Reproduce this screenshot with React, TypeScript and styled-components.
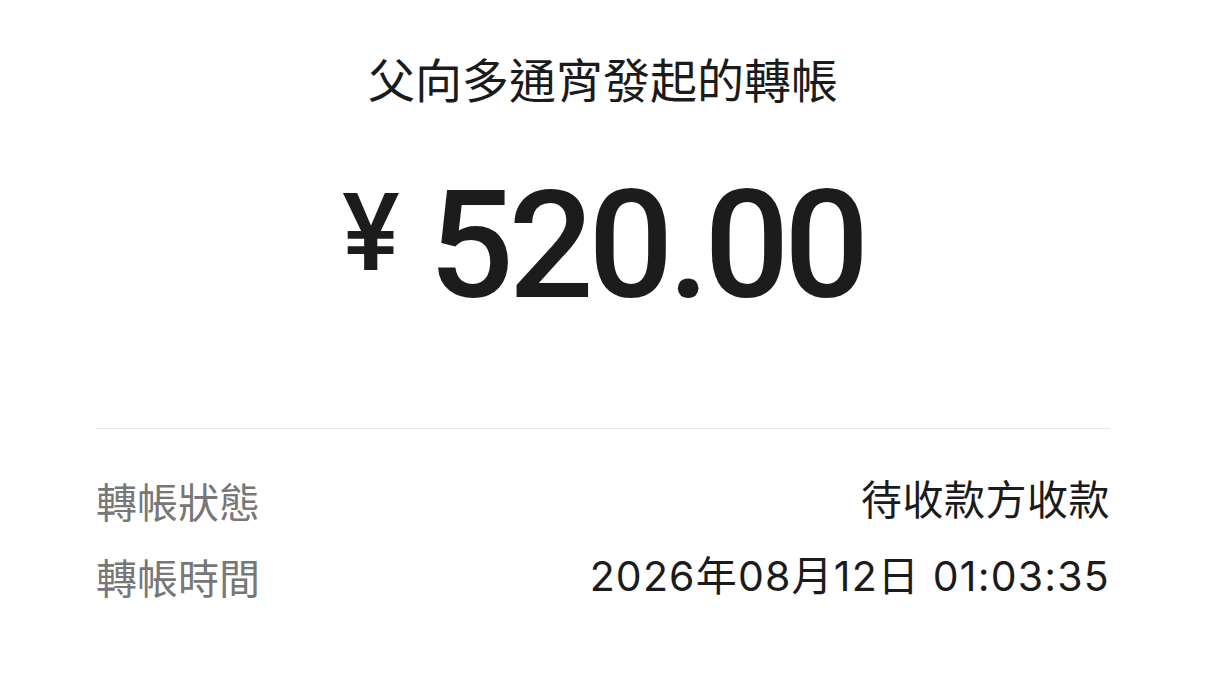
import React from 'react';
import styled, { createGlobalStyle } from 'styled-components';

const Global = createGlobalStyle`
  html, body {
    margin: 0;
    padding: 0;
    background: #ffffff;
  }
  body {
    font-family: "Noto Sans CJK TC", "Noto Sans", sans-serif;
    color: #1b1b1b;
  }
`;

const Page = styled.div`
  width: 1206px;
  height: 680px;
  box-sizing: border-box;
  padding: 48px 96px 0;
  display: flex;
  flex-direction: column;
`;

const Title = styled.div`
  text-align: center;
  font-size: 47px;
  line-height: 60px;
  color: #1b1b1b;
`;

const AmountRow = styled.div`
  margin-top: 63px;
  display: flex;
  justify-content: center;
  align-items: flex-start;
  gap: 29px;
  font-family: Roboto, "Liberation Sans", sans-serif;
  font-weight: 500;
  color: #1c1c1c;
`;

const Currency = styled.span`
  font-size: 108px;
  line-height: 108px;
  margin-top: 8px;
`;

const Amount = styled.span`
  font-size: 150px;
  line-height: 150px;
  letter-spacing: -5.5px;
`;

const Divider = styled.div`
  margin-top: 107px;
  height: 1px;
  background: #e6e6e6;
`;

const Rows = styled.div`
  margin-top: 33px;
  display: flex;
  flex-direction: column;
`;

const Row = styled.div`
  display: flex;
  justify-content: space-between;
  align-items: center;
  height: 76px;
  font-size: 41px;
  line-height: 76px;
`;

const Label = styled.span`
  color: #777777;
`;

const Value = styled.span<{ $spacing: number }>`
  font-family: Inter, "Noto Sans CJK TC", sans-serif;
  letter-spacing: ${(p) => p.$spacing}px;
  color: #1b1b1b;
`;

const details = [
  { label: '轉帳狀態', value: '待收款方收款', spacing: 0.5 },
  { label: '轉帳時間', value: '2026年08月12日 01:03:35', spacing: 1.2 },
];

export default function App() {
  return (
    <>
      <Global />
      <Page>
        <Title>父向多通宵發起的轉帳</Title>
        <AmountRow>
          <Currency>¥</Currency>
          <Amount>520.00</Amount>
        </AmountRow>
        <Divider />
        <Rows>
          {details.map((d) => (
            <Row key={d.label}>
              <Label>{d.label}</Label>
              <Value $spacing={d.spacing}>{d.value}</Value>
            </Row>
          ))}
        </Rows>
      </Page>
    </>
  );
}
